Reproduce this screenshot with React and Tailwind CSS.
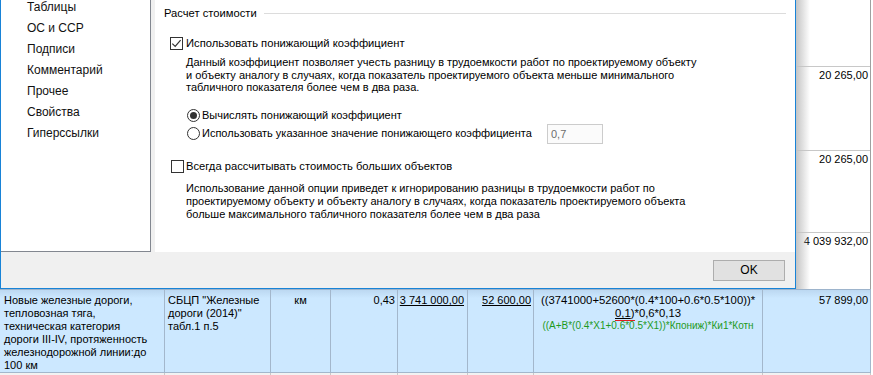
import React from 'react';

const ui = "font-['Liberation_Sans',Arial,sans-serif]";
const grid = 'grid grid-cols-[165px_106px_60px_67px_70px_66px_229px_108px]';

function CheckBox({ checked }) {
  return (
    <span className="w-[13px] h-[13px] border border-[#333] bg-white flex items-center justify-center shrink-0">
      {checked && (
        <svg width="11" height="11" viewBox="0 0 11 11">
          <path d="M1.3 5.6 L4.2 8.4 L9.6 2.2" fill="none" stroke="#333" strokeWidth="1.2" />
        </svg>
      )}
    </span>
  );
}

function Radio({ checked }) {
  return (
    <span className="w-[13px] h-[13px] rounded-full border border-[#333] bg-white flex items-center justify-center shrink-0">
      {checked && <span className="w-[7px] h-[7px] rounded-full bg-[#333]" />}
    </span>
  );
}

const menu = ['Таблицы', 'ОС и ССР', 'Подписи', 'Комментарий', 'Прочее', 'Свойства', 'Гиперссылки'];

function Dialog() {
  return (
    <div className={`w-[796px] h-[289px] shrink-0 border-l border-r border-b border-[#1883d7] bg-[#f0f0f0] flex flex-col ${ui}`}>
      <div className="h-[252px] flex gap-[4px]">
        {/* left list */}
        <div className="w-[150px] h-full bg-white border-r border-b border-[#828790] pl-[26px] text-[12px] text-[#111]">
          <div className="-mt-[3px]">
            {menu.map((m) => (
              <div key={m} className="h-[21px] leading-[21px]">{m}</div>
            ))}
          </div>
        </div>

        {/* settings panel */}
        <div className="flex-1 h-full bg-white text-[11px] text-black whitespace-nowrap">
          <div className="flex items-center pl-[9px] pr-[9px] pt-[6px] h-[20px] leading-[14px] text-[11.2px]">
            <span>Расчет стоимости</span>
            <span className="flex-1 h-px bg-[#dcdcdc] ml-[7px]" />
          </div>

          <div className="flex items-center ml-[15px] mt-[17px] h-[13px] leading-[13px] text-[11.2px]">
            <CheckBox checked />
            <span className="ml-[3px]">Использовать понижающий коэффициент</span>
          </div>

          <div className="ml-[31px] mt-[6px] leading-[12.5px]">
            Данный коэффициент позволяет учесть разницу в трудоемкости работ по проектируемому объекту<br />
            и объекту аналогу в случаях, когда показатель проектируемого объекта меньше минимального<br />
            табличного показателя более чем в два раза.
          </div>

          <div className="flex items-center ml-[32px] mt-[15px] h-[13px] leading-[13px]">
            <Radio checked />
            <span className="ml-[2px]">Вычислять понижающий коэффициент</span>
          </div>

          <div className="flex items-center ml-[32px] mt-[2px] h-[20px] leading-[13px]">
            <div className="w-[360px] flex items-center">
              <Radio />
              <span className="ml-[2px]">Использовать указанное значение понижающего коэффициента</span>
            </div>
            <div className="w-[56px] h-[20px] border border-[#cccccc] bg-[#fbfbfb] text-[#6d6d6d] pl-[3px] leading-[18px]">0,7</div>
          </div>

          <div className="flex items-center ml-[16px] mt-[16px] h-[13px] leading-[13px] text-[11.2px]">
            <CheckBox />
            <span className="ml-[2px]">Всегда рассчитывать стоимость больших объектов</span>
          </div>

          <div className="ml-[31px] mt-[9px] leading-[13px]">
            Использование данной опции приведет к игнорированию разницы в трудоемкости работ по<br />
            проектируемому объекту и объекту аналогу в случаях, когда показатель проектируемого объекта<br />
            больше максимального табличного показателя более чем в два раза
          </div>
        </div>
      </div>

      {/* footer */}
      <div className="flex-1 flex justify-end pt-[8px] pr-[10px]">
        <button className="w-[72px] h-[21px] bg-[#e1e1e1] border border-[#adadad] text-[12px] text-black leading-[19px]">OK</button>
      </div>
    </div>
  );
}

function SideStrip() {
  const rows = [
    { h: 'h-[67px]', v: '' },
    { h: 'h-[84px]', v: '20 265,00' },
    { h: 'h-[82px]', v: '20 265,00' },
    { h: 'flex-1', v: '4 039 932,00', last: true },
  ];
  return (
    <div className={`relative flex-1 h-[289px] bg-white ${ui}`}>
      <div className="w-[75px] h-full border-r border-[#a0a0a0] flex flex-col text-[11px] text-black">
        {rows.map((r, i) => (
          <div key={i} className={`${r.h} ${r.last ? '' : 'border-b border-[#c8c8c8]'} text-right pr-[2px] pt-[2px] leading-[13px]`}>
            {r.v}
          </div>
        ))}
      </div>
      <div className="absolute left-0 top-0 bottom-0 w-[14px] bg-linear-to-r from-[#c4c4c4] to-transparent pointer-events-none" />
    </div>
  );
}

function BottomRow() {
  const cell = 'border-r border-[#a3b7cc] pt-[4px] leading-[13px]';
  return (
    <div className={`${ui} text-[11px] text-black`}>
      <div className={`${grid} w-[871px] h-[83px] border-t border-[#9db4cc] bg-linear-to-b from-[#bcd8f1] to-[#cce8ff] to-[10%]`}>
        <div className={`${cell} pl-[4px]`}>
          Новые железные дороги,<br />
          тепловозная тяга,<br />
          техническая категория<br />
          дороги III-IV, протяженность<br />
          железнодорожной линии:до<br />
          100 км
        </div>
        <div className={`${cell} pl-[3px]`}>
          СБЦП "Железные<br />
          дороги (2014)"<br />
          табл.1 п.5
        </div>
        <div className={`${cell} text-center`}>км</div>
        <div className={`${cell} text-right pr-[2px]`}>0,43</div>
        <div className={`${cell} text-right pr-[3px]`}>
          <span className="underline">3 741 000,00</span>
        </div>
        <div className={`${cell} text-right pr-[2px]`}>
          <span className="underline">52 600,00</span>
        </div>
        <div className={`${cell} text-center text-[11.3px] whitespace-nowrap`}>
          <div>((3741000+52600*(0.4*100+0.6*0.5*100))*</div>
          <div>
            <span className="border-b border-[#e02020] pb-[1px]">
              <span className="underline">0,1</span>)
            </span>
            *0,6*0,13
          </div>
          <div className="text-[10px] leading-[12px] text-[#1e9a1e]">((A+B*(0.4*X1+0.6*0.5*X1))*Кпониж)*Ки1*Котн</div>
        </div>
        <div className={`${cell} text-right pr-[2px]`}>57 899,00</div>
      </div>
      <div className={`${grid} w-[871px] h-[3px] border-t border-[#a3b7cc] bg-[#f2f2f2]`}>
        {Array.from({ length: 8 }).map((_, i) => (
          <div key={i} className="border-r border-[#c8c8c8]" />
        ))}
      </div>
    </div>
  );
}

export default function App() {
  return (
    <div className="w-[873px] h-[375px] overflow-hidden bg-white">
      <div className="flex">
        <Dialog />
        <SideStrip />
      </div>
      <BottomRow />
    </div>
  );
}
